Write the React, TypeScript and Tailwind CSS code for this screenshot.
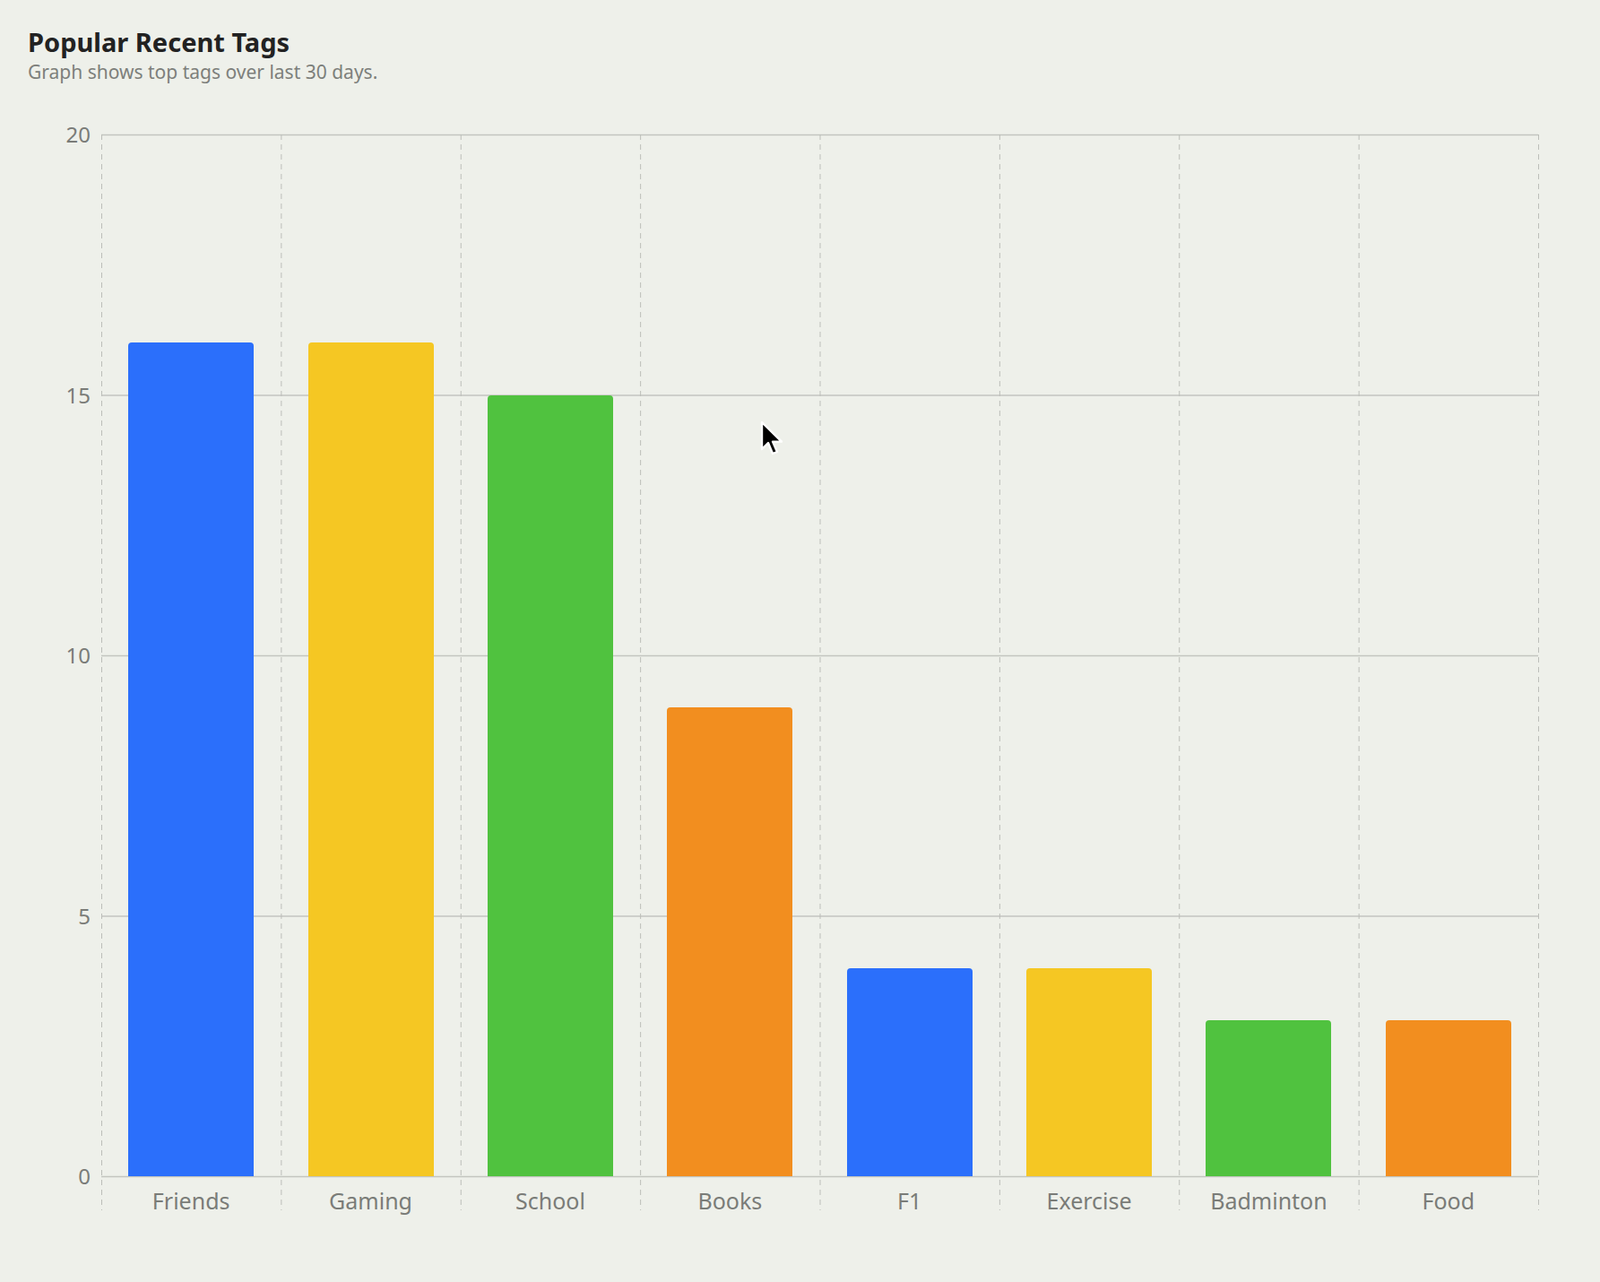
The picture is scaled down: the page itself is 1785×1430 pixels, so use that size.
const tags = [
  { name: "Friends", value: 16, color: "bg-[#2b6ffb]" },
  { name: "Gaming", value: 16, color: "bg-[#f5c723]" },
  { name: "School", value: 15, color: "bg-[#50c23f]" },
  { name: "Books", value: 9, color: "bg-[#f28e1f]" },
  { name: "F1", value: 4, color: "bg-[#2b6ffb]" },
  { name: "Exercise", value: 4, color: "bg-[#f5c723]" },
  { name: "Badminton", value: 3, color: "bg-[#50c23f]" },
  { name: "Food", value: 3, color: "bg-[#f28e1f]" },
]

const PLOT_H = 1162
const PLOT_W = 1603

export default function App() {
  return (
    <div className="w-[1785px] h-[1430px] bg-[#eef0ea] font-['Inter',sans-serif] pl-[31px] pt-[30px] relative">
      <h1 className="text-[29px] font-bold text-[#222] leading-[34px]">Popular Recent Tags</h1>
      <p className="text-[21px] text-[#7d7f7b] leading-[28px] mt-[2px]">Graph shows top tags over last 30 days.</p>

      <div className="flex mt-[56px]">
        {/* y axis labels */}
        <div className="relative w-[70px] h-[1162px] text-[24px] text-[#7a7c78]">
          {[20, 15, 10, 5, 0].map((v, i) => (
            <span
              key={v}
              className="absolute right-0 leading-none"
              style={{ top: (i * PLOT_H) / 4 - 12 }}
            >
              {v}
            </span>
          ))}
        </div>
        <div className="ml-[12px]">
          <div className="relative w-[1603px] h-[1162px]">
            <svg className="absolute inset-0 overflow-visible" width={PLOT_W} height={PLOT_H + 38}>
              {[0, 1, 2, 3, 4].map((i) => (
                <line key={i} x1={0} x2={PLOT_W} y1={(i * PLOT_H) / 4 + 0.5} y2={(i * PLOT_H) / 4 + 0.5} stroke="#c3c5c0" strokeWidth={1.5} />
              ))}
              {Array.from({ length: 9 }).map((_, i) => (
                <line key={i} x1={(i * PLOT_W) / 8 + 0.5} x2={(i * PLOT_W) / 8 + 0.5} y1={0} y2={PLOT_H + 38} stroke="#bcbeb9" strokeWidth={1} strokeDasharray="6 5" />
              ))}
            </svg>
            <div className="absolute inset-0 grid grid-cols-8 items-end">
              {tags.map((t) => (
                <div key={t.name} className="flex justify-center">
                  <div className={`w-[140px] rounded-t-[4px] ${t.color}`} style={{ height: (t.value / 20) * PLOT_H }} />
                </div>
              ))}
            </div>
          </div>
          <div className="grid grid-cols-8 w-[1603px] mt-[10px] text-[25px] text-[#7a7c78]">
            {tags.map((t) => (
              <div key={t.name} className="text-center leading-[34px]">{t.name}</div>
            ))}
          </div>
        </div>
      </div>

      {/* mouse cursor */}
      <svg className="absolute left-[848px] top-[469px]" width="28" height="42" viewBox="0 0 14 21">
        <path d="M1 1 L1 16 L4.5 12.5 L7 18.5 L9.5 17.5 L7 11.8 L12 11.8 Z" fill="#000" stroke="#fff" strokeWidth="1.2" strokeLinejoin="round" />
      </svg>
    </div>
  )
}
